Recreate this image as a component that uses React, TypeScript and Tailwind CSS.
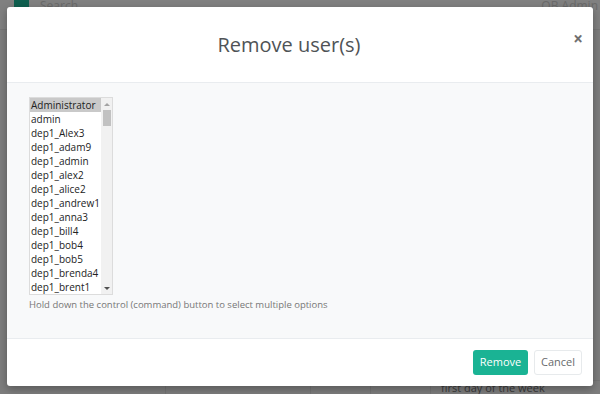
import React from 'react';

const users = [
  'Administrator',
  'admin',
  'dep1_Alex3',
  'dep1_adam9',
  'dep1_admin',
  'dep1_alex2',
  'dep1_alice2',
  'dep1_andrew1',
  'dep1_anna3',
  'dep1_bill4',
  'dep1_bob4',
  'dep1_bob5',
  'dep1_brenda4',
  'dep1_brent1',
];

export default function App() {
  return (
    <div className="relative h-[394px] w-[600px] overflow-hidden bg-[#7d7d7d] font-['Open_Sans',sans-serif]">
      {/* page behind the backdrop */}
      <div className="flex h-[30px] items-start border-b border-[#767676] bg-[#808080]">
        <div className="ml-[14px] h-[30px] w-[15px] bg-[#0f5f4f]" />
        <span className="ml-[11px] text-[12px] leading-[12px] text-[#6a6a6a]">Search</span>
        <span className="ml-auto mr-[2px] text-[12px] leading-[12px] text-[#6a6a6a]">OB Admin</span>
      </div>
      <div className="absolute bottom-0 left-[20px] right-0 flex h-[14px] border-t border-[#747474]">
        <div className="w-[146px] border-r border-[#747474]" />
        <div className="w-[145px] border-r border-[#747474]" />
        <div className="w-[60px] border-r border-[#747474]" />
        <div className="w-[60px] border-r border-[#747474]" />
        <div className="pl-[10px] text-[11px] leading-[13px] text-[#3a3a3a]">first day of the week</div>
      </div>

      {/* modal */}
      <div className="absolute left-[7px] top-[7px] flex h-[379px] w-[586px] flex-col rounded-[3px] bg-white shadow-[0_3px_9px_rgba(0,0,0,0.3)]">
        <div className="relative flex h-[76px] items-center justify-center border-b border-[#e9ecef] pr-[22px]">
          <h4 className="text-[20px] font-normal text-[#4f5356]">Remove user(s)</h4>
          <span className="absolute right-[10px] top-[23px] text-[17px] font-bold leading-none text-[#6f6f6f]">×</span>
        </div>

        <div className="flex-1 bg-[#f8f9fa] pl-[22px] pt-[14px]">
          <div className="flex h-[198px] w-[84px] border border-[#dcdcdc] bg-white">
            <div className="flex-1 overflow-hidden">
              {users.map((u, i) => (
                <div
                  key={u}
                  className={`h-[14px] whitespace-nowrap pl-[1px] text-[10px] leading-[14px] text-[#222] ${
                    i === 0 ? 'bg-[#c9c9c9]' : ''
                  }`}
                >
                  {u}
                </div>
              ))}
            </div>
            <div className="flex w-[11px] flex-col items-center bg-[#f1f1f1]">
              <div className="flex h-[12px] items-center justify-center">
                <div className="h-0 w-0 border-x-[3px] border-b-[3px] border-x-transparent border-b-[#a3a3a3]" />
              </div>
              <div className="h-[16px] w-[8px] bg-[#c1c1c1]" />
              <div className="flex-1" />
              <div className="flex h-[12px] items-center justify-center">
                <div className="h-0 w-0 border-x-[3px] border-t-[3px] border-x-transparent border-t-[#505050]" />
              </div>
            </div>
          </div>
          <p className="mt-[3px] text-[9.5px] text-[#777]">Hold down the control (command) button to select multiple options</p>
        </div>

        <div className="flex h-[48px] items-center justify-end gap-[6px] border-t border-[#e9ecef] pr-[11px]">
          <button className="h-[25px] w-[55px] rounded-[3px] bg-[#1ab394] text-[11px] text-white">Remove</button>
          <button className="h-[25px] w-[48px] rounded-[3px] border border-[#e7eaec] bg-white text-[11px] text-[#676a6c]">Cancel</button>
        </div>
      </div>
    </div>
  );
}
